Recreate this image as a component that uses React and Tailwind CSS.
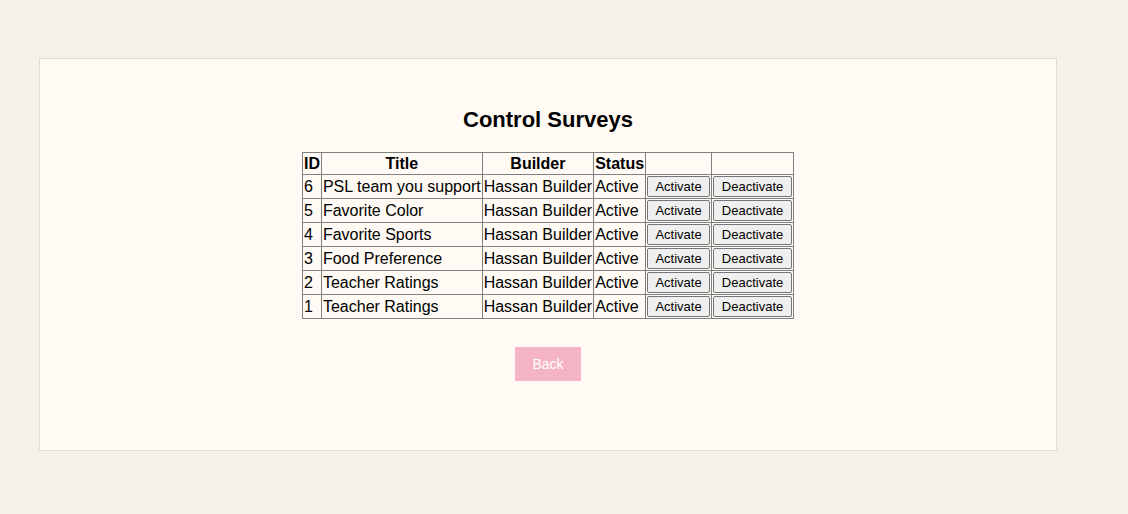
import React from "react";

const surveys = [
  { id: 6, title: "PSL team you support" },
  { id: 5, title: "Favorite Color" },
  { id: 4, title: "Favorite Sports" },
  { id: 3, title: "Food Preference" },
  { id: 2, title: "Teacher Ratings" },
  { id: 1, title: "Teacher Ratings" },
];

const cell = "border border-[#808080] px-px py-px";
const btn =
  "h-[21px] w-full bg-[#efefef] border border-[#767676] rounded-[2px] px-[6px] text-[13px] leading-none text-black";

export default function App() {
  return (
    <div
      className="min-h-[514px] bg-[#f4f0ea] pt-[58px] pl-[39px]"
      style={{ fontFamily: '"Liberation Sans", Arial, sans-serif' }}
    >
      <div className="w-[1018px] h-[393px] bg-[#fffaf3] border border-[#e2dbcf] flex flex-col items-center pt-[48px]">
        <h2 className="text-[22px] font-bold leading-[25px] text-black mb-[20px]">
          Control Surveys
        </h2>

        <table className="border-collapse border border-[#808080] text-[16px] leading-[18px] text-black">
          <thead>
            <tr className="h-[22px]">
              <th className={cell}>ID</th>
              <th className={cell}>Title</th>
              <th className={cell}>Builder</th>
              <th className={cell}>Status</th>
              <th className={`${cell} w-[66px]`}></th>
              <th className={`${cell} w-[82px]`}></th>
            </tr>
          </thead>
          <tbody>
            {surveys.map((s) => (
              <tr key={s.id} className="h-[24px]">
                <td className={cell}>{s.id}</td>
                <td className={cell}>{s.title}</td>
                <td className={cell}>Hassan Builder</td>
                <td className={cell}>Active</td>
                <td className={cell}>
                  <button className={btn}>Activate</button>
                </td>
                <td className={cell}>
                  <button className={btn}>Deactivate</button>
                </td>
              </tr>
            ))}
          </tbody>
        </table>

        <button className="mt-[28px] h-[34px] w-[66px] bg-[#f4b4c3] text-white text-[14px]">
          Back
        </button>
      </div>
    </div>
  );
}
